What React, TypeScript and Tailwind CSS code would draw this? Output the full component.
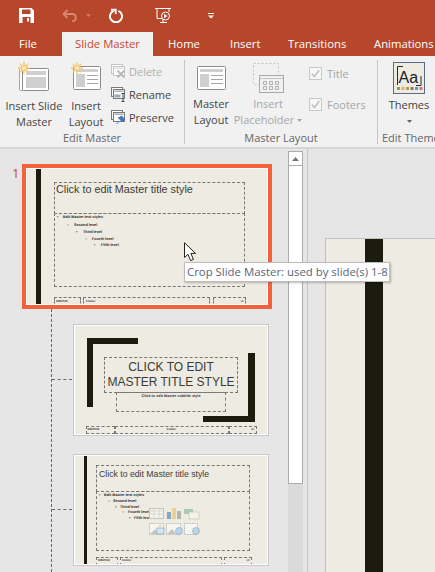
import React from "react";

const ui = "font-['Open_Sans','Noto_Sans',sans-serif]";

function Sun() {
  return (
    <g stroke="#f3c877" strokeWidth="1.4" fill="none">
      <circle cx="6" cy="6" r="2.8" fill="#fbe7bd" />
      <path d="M6 0v2.4M6 9.6V12M0 6h2.4M9.6 6H12M1.8 1.8l1.7 1.7M8.5 8.5l1.7 1.7M1.8 10.2l1.7-1.7M8.5 3.5l1.7-1.7" />
    </g>
  );
}

function InsertSlideMasterIcon() {
  return (
    <svg width="32" height="30" viewBox="0 0 32 30" className="block">
      <rect x="1.5" y="6.5" width="26" height="22" rx="1" fill="#fff" stroke="#a6a6a6" />
      <rect x="4.5" y="6.5" width="26" height="22" rx="1" fill="#fff" stroke="#8c8c8c" />
      <rect x="8" y="9" width="20" height="4" fill="#cfcfcf" />
      <rect x="8" y="15" width="20" height="11" fill="#cfcfcf" />
      <Sun />
    </svg>
  );
}

function InsertLayoutIcon() {
  return (
    <svg width="31" height="30" viewBox="0 0 31 30" className="block">
      <rect x="2.5" y="4.5" width="27" height="23" rx="1" fill="#fff" stroke="#8c8c8c" />
      <rect x="5" y="7" width="22" height="3" fill="#cfcfcf" />
      <rect x="5" y="12" width="9" height="13" fill="#cfcfcf" />
      <path d="M16 13.5h11M16 17.5h11M16 21.5h11" stroke="#a6a6a6" />
      <Sun />
    </svg>
  );
}

function MasterLayoutIcon() {
  return (
    <svg width="29" height="24" viewBox="0 0 29 24" className="block">
      <rect x="0.5" y="0.5" width="28" height="23" rx="1" fill="#fff" stroke="#8c8c8c" />
      <rect x="3" y="3" width="23" height="3" fill="#cfcfcf" />
      <rect x="3" y="8" width="9" height="13" fill="#cfcfcf" />
      <path d="M14 9.5h12M14 13.5h12M14 17.5h12" stroke="#a6a6a6" />
    </svg>
  );
}

function InsertPlaceholderIcon() {
  return (
    <svg width="31" height="31" viewBox="0 0 31 31" className="block">
      <rect x="0.5" y="0.5" width="25" height="21" fill="none" stroke="#c4c4c4" strokeDasharray="2 2" />
      <rect x="6.5" y="12.5" width="24" height="17" fill="#f1f1f1" stroke="#a8a8a8" />
      <path d="M7 15.5h23" stroke="#c4c4c4" />
      <path d="M10.5 18.5h3v3h-3zM16.5 18.5h3v3h-3zM22.5 18.5h3v3h-3zM10.5 23.5h3v3h-3zM16.5 23.5h3v3h-3zM22.5 23.5h3v3h-3z" fill="none" stroke="#b0b0b0" />
    </svg>
  );
}

function SmallStack({ children, muted }: { children?: React.ReactNode; muted?: boolean }) {
  const c = muted ? "#c6c6c6" : "#7a7a7a";
  return (
    <svg width="15" height="15" viewBox="0 0 15 15" className="block shrink-0">
      <rect x="0.5" y="0.5" width="11" height="9" fill="#fff" stroke={c} />
      <rect x="2.5" y="2.5" width="11" height="9" fill="#fff" stroke={c} />
      <rect x="3.5" y="3.5" width="9" height="1.4" fill={muted ? "#dedede" : "#a9a9a9"} />
      {children}
    </svg>
  );
}

function Check() {
  return (
    <svg width="13" height="13" viewBox="0 0 13 13" className="block shrink-0">
      <rect x="0.5" y="0.5" width="12" height="12" fill="#f6f6f6" stroke="#c8c8c8" />
      <path d="M2.8 6.8l2.6 2.8 4.8-6.4" fill="none" stroke="#bdbdbd" strokeWidth="1.5" />
    </svg>
  );
}

function Caret({ className = "" }: { className?: string }) {
  return (
    <svg width="5" height="3" viewBox="0 0 5 3" className={className}>
      <path d="M0 0h5L2.5 3z" fill="currentColor" />
    </svg>
  );
}

function Header() {
  return (
    <div className="h-[32px] flex items-center bg-[#b7472a] text-white">
      <svg width="15" height="15" viewBox="0 0 15 15" className="ml-[19px] mt-[-2px]">
        <path fillRule="evenodd" d="M0 0h12.5L15 2.5V15H0zM3 1.5V6h8.5V1.5zM3.5 9v6h8V9zM8 10h2v3.5H8z" fill="#fff" />
      </svg>
      <svg width="15" height="13" viewBox="0 0 15 13" className="ml-[28px] mt-[-2px]">
        <path d="M5.5 1L1.5 5l4 4M2 5h8c2.5 0 3.8 1.6 3.8 3.6S12.3 12.3 10 12.3" fill="none" stroke="#d9866d" strokeWidth="1.8" />
      </svg>
      <Caret className="ml-[9px] mt-[-1px] text-[#cf7a62]" />
      <svg width="14" height="15" viewBox="0 0 14 15" className="ml-[18px] mt-[-2px]">
        <path d="M4.6 2.8A6 6 0 1 0 9.4 2.8" fill="none" stroke="#fff" strokeWidth="2" />
        <path d="M2 0.8h5.6v5.4L5.8 6V2.8H2z" fill="#fff" />
      </svg>
      <svg width="17" height="17" viewBox="0 0 17 17" className="ml-[32px] mt-[-1px]">
        <path d="M0 1.5h16M2 1.5V11.5H7M14 1.5V5M5 15.5h7M8 11.5v4" fill="none" stroke="#fff" />
        <circle cx="10.5" cy="9" r="4" fill="#b7472a" stroke="#fff" />
        <path d="M9 6.8l3.5 2.2L9 11.2z" fill="#fff" />
      </svg>
      <svg width="6" height="6" viewBox="0 0 6 6" className="ml-[36px] mt-[-1px]">
        <path d="M0 0.5h6" stroke="#fff" />
        <path d="M0 2.5h6L3 5.5z" fill="#fff" />
      </svg>
    </div>
  );
}

function Tabs() {
  return (
    <div className="h-[24px] flex bg-[#b7472a] text-white text-[11.3px] leading-[24px] whitespace-nowrap overflow-hidden">
      <div className="w-[62px] pl-[19px]">File</div>
      <div className="w-[91px] bg-[#f1f1f1] text-[#c8472e] text-center">Slide Master</div>
      <div className="ml-[15px] w-[62px]">Home</div>
      <div className="w-[58px]">Insert</div>
      <div className="w-[86px]">Transitions</div>
      <div>Animations</div>
    </div>
  );
}

function Small({ label, muted, icon }: { label: string; muted?: boolean; icon: React.ReactNode }) {
  return (
    <div className={`h-[23px] flex items-center gap-[3px] ${muted ? "text-[#b0b0b0]" : "text-[#444]"}`}>
      {icon}
      <span>{label}</span>
    </div>
  );
}

function GroupLabel({ children, className = "" }: { children: React.ReactNode; className?: string }) {
  return <div className={`h-[12px] leading-[12px] text-[#666] ${className}`}>{children}</div>;
}

function Ribbon() {
  return (
    <div className="h-[93px] shrink-0 flex bg-[#f1f1f1] border-b-2 border-[#d6d6d6] text-[11px] leading-[16px] text-[#444] whitespace-nowrap overflow-hidden">
      <div className="w-[185px] shrink-0 flex flex-col mt-[4px] mb-[3px] border-r border-[#c6c6c6]">
        <div className="flex-1 flex">
          <div className="w-[68px] flex flex-col items-center pt-[2px]">
            <InsertSlideMasterIcon />
            <div className="mt-[6px] text-center">Insert Slide<br />Master</div>
          </div>
          <div className="w-[36px] flex flex-col items-center pt-[2px]">
            <InsertLayoutIcon />
            <div className="mt-[6px] text-center">Insert<br />Layout</div>
          </div>
          <div className="ml-[7px] flex flex-col">
            <Small label="Delete" muted icon={
              <SmallStack muted><path d="M6.5 6.5l7 7M13.5 6.5l-7 7" stroke="#b8b8b8" strokeWidth="1.8" /></SmallStack>
            } />
            <Small label="Rename" icon={
              <SmallStack><rect x="3.5" y="7.5" width="6" height="3" fill="#8fa9c9" /><path d="M12 6.5v8M10.5 6.5h3M10.5 14.5h3" stroke="#444" /></SmallStack>
            } />
            <Small label="Preserve" icon={
              <SmallStack><path d="M5.5 14l3-3M8 7.5l4.5 4.5M10.5 6l3 3-2 3-4-4z" stroke="#3f77c2" fill="#3f77c2" strokeWidth="1" /></SmallStack>
            } />
          </div>
        </div>
        <GroupLabel className="text-center">Edit Master</GroupLabel>
      </div>
      <div className="w-[193px] shrink-0 flex flex-col mt-[4px] mb-[3px] border-r border-[#c6c6c6]">
        <div className="flex-1 flex">
          <div className="w-[50px] ml-[1px] flex flex-col items-center pt-[6px]">
            <MasterLayoutIcon />
            <div className="mt-[6px] text-center">Master<br />Layout</div>
          </div>
          <div className="ml-[-3px] w-[70px] flex flex-col items-center pt-[3px] text-[#a6a6a6]">
            <InsertPlaceholderIcon />
            <div className="mt-[2px] text-center">Insert<br />
              <span className="inline-flex items-center gap-[3px]">Placeholder<Caret /></span>
            </div>
          </div>
          <div className="ml-[6px] flex flex-col pt-[7px] gap-[18px] text-[#a6a6a6]">
            <div className="h-[13px] flex items-center gap-[5px]"><Check />Title</div>
            <div className="h-[13px] flex items-center gap-[5px]"><Check />Footers</div>
          </div>
        </div>
        <GroupLabel className="text-center">Master Layout</GroupLabel>
      </div>
      <div className="flex-1 flex flex-col mt-[4px] mb-[3px] pl-[4px]">
        <div className="flex-1 flex flex-col items-center w-[54px]">
          <div className="mt-[2px] w-[32px] h-[32px] border border-[#5b6b82] bg-[#eeebe3] flex flex-col">
            <svg width="30" height="30" viewBox="0 0 30 30" className="block">
              <path d="M3.5 22V3.5H9M27 13v9.5H22" fill="none" stroke="#2a2a1a" />
              <rect x="3" y="24" width="3" height="3" fill="#8b9a6a" />
              <rect x="7.5" y="24" width="3" height="3" fill="#e0b060" />
              <rect x="12" y="24" width="3" height="3" fill="#b0986a" />
              <rect x="16.5" y="24" width="3" height="3" fill="#8a7a5a" />
              <rect x="21" y="24" width="3" height="3" fill="#5a9ac0" />
              <rect x="25.5" y="24" width="3" height="3" fill="#d0708a" />
              <text x="4.5" y="20" fontSize="16" fontFamily="'Liberation Sans',sans-serif" fill="#222">Aa</text>
            </svg>
          </div>
          <div className="mt-[3px] text-[#444]">Themes</div>
          <Caret className="mt-[7px] text-[#666]" />
        </div>
        <GroupLabel>Edit Theme</GroupLabel>
      </div>
    </div>
  );
}

function Ph({ className = "", children }: { className?: string; children?: React.ReactNode }) {
  return (
    <div className={`shrink-0 border border-dashed border-[#777] overflow-hidden whitespace-nowrap ${className}`}>{children}</div>
  );
}

function Level({ className, markClass, mark, text }: { className: string; markClass: string; mark: string; text: string }) {
  return (
    <div className={`flex text-[3.8px] leading-[5px] font-bold text-[#222] whitespace-nowrap [text-rendering:geometricPrecision] ${className}`}>
      <span className={markClass}>{mark}</span>
      {text}
    </div>
  );
}

function Tiny({ text, className = "" }: { text: string; className?: string }) {
  return <div className={`text-[3px] leading-[4px] font-bold text-[#333] [text-rendering:geometricPrecision] ${className}`}>{text}</div>;
}

const sl = "font-['Liberation_Sans',sans-serif] text-[#3c3c34]";

function Slide1() {
  return (
    <div className="ml-[22px] mt-[15px] w-[250px] h-[145px] border-4 border-[#f4623b] shrink-0">
      <div className="w-full h-full border border-white">
        <div className={`w-[240px] h-[135px] flex bg-[#eeebe3] overflow-hidden ${sl}`}>
          <div className="ml-[9px] w-[5px] h-full bg-[#1b1c0e]" />
          <div className="ml-[13px] w-[192px] flex flex-col pt-[13px]">
            <Ph className="w-[191px] h-[32px] pl-[1px] text-[10.8px] leading-[13px]">Click to edit Master title style</Ph>
            <Ph className="-mt-px w-[191px] h-[74px] pt-px">
              <Level className="pl-[2px] h-[8px]" markClass="w-[6px]" mark="▪" text="Edit Master text styles" />
              <Level className="pl-[12px] h-[7px]" markClass="w-[7px]" mark="–" text="Second level" />
              <Level className="pl-[21px] h-[7px]" markClass="w-[7px]" mark="▪" text="Third level" />
              <Level className="pl-[30px] h-[6px]" markClass="w-[7px]" mark="–" text="Fourth level" />
              <Level className="pl-[39px] h-[6px]" markClass="w-[7px]" mark="▪" text="Fifth level" />
            </Ph>
            <div className="mt-[10px] flex gap-[2px]">
              <Ph className="w-[27px] h-[10px] pl-px pt-px"><Tiny text="9/8/2016" /></Ph>
              <Ph className="w-[127px] h-[10px] pl-[2px] pt-px"><Tiny text="Footer" /></Ph>
              <Ph className="ml-px w-[33px] h-[10px] pr-px pt-px"><Tiny className="text-right" text="‹#›" /></Ph>
            </div>
          </div>
        </div>
      </div>
    </div>
  );
}

function Slide2() {
  return (
    <div className="ml-[73px] mt-[15px] w-[196px] h-[112px] border border-[#c8c8c8] bg-white p-px shrink-0">
      <div className={`relative w-[192px] h-[108px] flex flex-col items-center pt-[31px] bg-[#eeebe3] overflow-hidden ${sl}`}>
        <svg width="192" height="108" viewBox="0 0 192 108" className="absolute inset-0">
          <path d="M12 12h51v6H18v63h-6zM173 27h7v69h-52v-6h45z" fill="#1b1c0e" />
        </svg>
        <Ph className="relative w-[134px] h-[36px] text-center text-[12px] leading-[15px] pt-[2px]">CLICK TO EDIT<br />MASTER TITLE STYLE</Ph>
        <Ph className="relative -mt-px w-[110px] h-[20px] pt-px text-center">
          <Tiny className="!text-[3.8px]" text="Click to edit Master subtitle style" />
        </Ph>
        <div className="relative mt-auto flex">
          <Ph className="w-[29px] h-[8px] pl-px"><Tiny text="9/8/2016" /></Ph>
          <Ph className="w-[114px] h-[8px] text-center"><Tiny text="Footer" /></Ph>
          <Ph className="w-[28px] h-[8px] pr-px"><Tiny className="text-right" text="‹#›" /></Ph>
        </div>
      </div>
    </div>
  );
}

function Slide3() {
  return (
    <div className="ml-[73px] mt-[18px] w-[196px] h-[112px] border border-[#c8c8c8] bg-white p-px shrink-0">
      <div className={`w-[192px] h-[108px] flex bg-[#eeebe3] overflow-hidden ${sl}`}>
        <div className="ml-[9px] w-[3px] h-full bg-[#1b1c0e]" />
        <div className="ml-[9px] w-[156px] flex flex-col pt-[9px]">
          <Ph className="w-[154px] h-[27px] pl-[2px] pt-[3px] text-[8.7px] leading-[11px]">Click to edit Master title style</Ph>
          <Ph className="relative -mt-px w-[154px] h-[60px] pt-px">
            <Level className="pl-[2px] h-[6px]" markClass="w-[5px]" mark="▪" text="Edit Master text styles" />
            <Level className="pl-[11px] h-[6px]" markClass="w-[5px]" mark="–" text="Second level" />
            <Level className="pl-[18px] h-[5px]" markClass="w-[5px]" mark="▪" text="Third level" />
            <Level className="pl-[25px] h-[6px]" markClass="w-[6px]" mark="–" text="Fourth level" />
            <Level className="pl-[32px] h-[6px]" markClass="w-[5px]" mark="▪" text="Fifth level" />
            <svg width="52" height="28" viewBox="0 0 52 28" className="absolute left-[52px] top-[16px]">
              <rect x="0.5" y="0.5" width="14" height="10" fill="#f3f3ee" stroke="#c3c3bb" />
              <path d="M0 3h15M0 6h15M5 0v11M10 0v11" stroke="#d0d0c8" strokeWidth="0.7" />
              <rect x="18" y="4" width="4" height="7" fill="#7fa8c8" />
              <rect x="23" y="0" width="4" height="11" fill="#e8cf9a" />
              <rect x="28" y="3" width="4" height="8" fill="#b5b5ad" />
              <rect x="35" y="1" width="9" height="5" fill="#a9c9bd" />
              <rect x="40" y="4" width="10" height="7" fill="#f3f3ee" stroke="#c3c3bb" strokeWidth="0.7" />
              <rect x="0.5" y="15.5" width="14" height="11" fill="#f6f6f1" stroke="#cfcfc7" />
              <path d="M1 26l5-5 4 5z" fill="#c6c6be" />
              <rect x="8" y="20" width="7" height="6" fill="#d6e6f1" stroke="#7fa8c8" strokeWidth="0.7" />
              <path d="M11 16.5l1 1.6-1 1-1-1z" fill="#e8c070" />
              <rect x="17.5" y="15.5" width="14" height="11" fill="#f6f6f1" stroke="#cfcfc7" />
              <path d="M18 26l5-5 4 5z" fill="#c6c6be" />
              <circle cx="30" cy="23" r="3.5" fill="#bcd4e6" stroke="#7fa8c8" strokeWidth="0.6" />
              <rect x="35.5" y="15.5" width="13" height="11" fill="#f6f6f1" stroke="#b8b8b0" strokeDasharray="1.5 1" />
              <circle cx="47" cy="23" r="3.5" fill="#bcd4e6" stroke="#7fa8c8" strokeWidth="0.6" />
            </svg>
          </Ph>
          <div className="mt-[6px] flex gap-[2px]">
            <Ph className="w-[22px] h-[9px] pl-px"><Tiny text="9/8/2016" /></Ph>
            <Ph className="w-[102px] h-[9px] pl-px"><Tiny text="Footer" /></Ph>
            <Ph className="w-[28px] h-[9px] pr-px"><Tiny className="text-right" text="‹#›" /></Ph>
          </div>
        </div>
      </div>
    </div>
  );
}

function Thumbs() {
  return (
    <div className="relative w-[288px] shrink-0 flex flex-col overflow-hidden">
      <span className="absolute left-[12px] top-[15px] text-[13px] leading-[18px] text-[#c8472e]">1</span>
      <div className="absolute left-[51px] top-[160px] bottom-0 border-l border-dashed border-[#666]" />
      <div className="absolute left-[52px] top-[230px] w-[20px] border-t border-dashed border-[#666]" />
      <div className="absolute left-[52px] top-[360px] w-[20px] border-t border-dashed border-[#666]" />
      <Slide1 />
      <Slide2 />
      <Slide3 />
    </div>
  );
}

function Scrollbar() {
  return (
    <div className="w-[15px] shrink-0 mt-[2px] flex flex-col bg-[#dadada]">
      <div className="h-[15px] bg-white border border-[#ababab] flex items-center justify-center">
        <svg width="7" height="4" viewBox="0 0 7 4"><path d="M0 4h7L3.5 0z" fill="#777" /></svg>
      </div>
      <div className="h-[318px] bg-white border border-t-0 border-[#ababab]" />
    </div>
  );
}

function Canvas() {
  return (
    <div className="ml-[4px] flex-1 border-l border-[#c6c6c6] pl-[17px] pt-[89px]">
      <div className="h-full border-t border-l border-[#c0c0c0] bg-[#eeebe3] pl-[39px]">
        <div className="w-[18px] h-full bg-[#1b1c0e]" />
      </div>
    </div>
  );
}

export default function App() {
  return (
    <div className={`relative w-[435px] h-[572px] overflow-hidden flex flex-col bg-[#e6e6e6] ${ui}`}>
      <Header />
      <Tabs />
      <Ribbon />
      <div className="flex-1 flex min-h-0">
        <Thumbs />
        <Scrollbar />
        <Canvas />
      </div>
      <svg width="13" height="20" viewBox="0 0 13 20" className="absolute left-[184px] top-[242px]">
        <path d="M0.5 0.8V15.5L4 12.3 6.6 18.6 9.4 17.4 6.9 11.4H11.6z" fill="#fff" stroke="#222" />
      </svg>
      <div className="absolute left-[184px] top-[262px] w-[206px] h-[20px] bg-white border border-[#bdbdbd] shadow-[1px_1px_2px_rgba(0,0,0,0.25)] text-[11.4px] leading-[18px] pl-[2px] text-[#5a6478] whitespace-nowrap">
        Crop Slide Master: used by slide(s) 1-8
      </div>
    </div>
  );
}
